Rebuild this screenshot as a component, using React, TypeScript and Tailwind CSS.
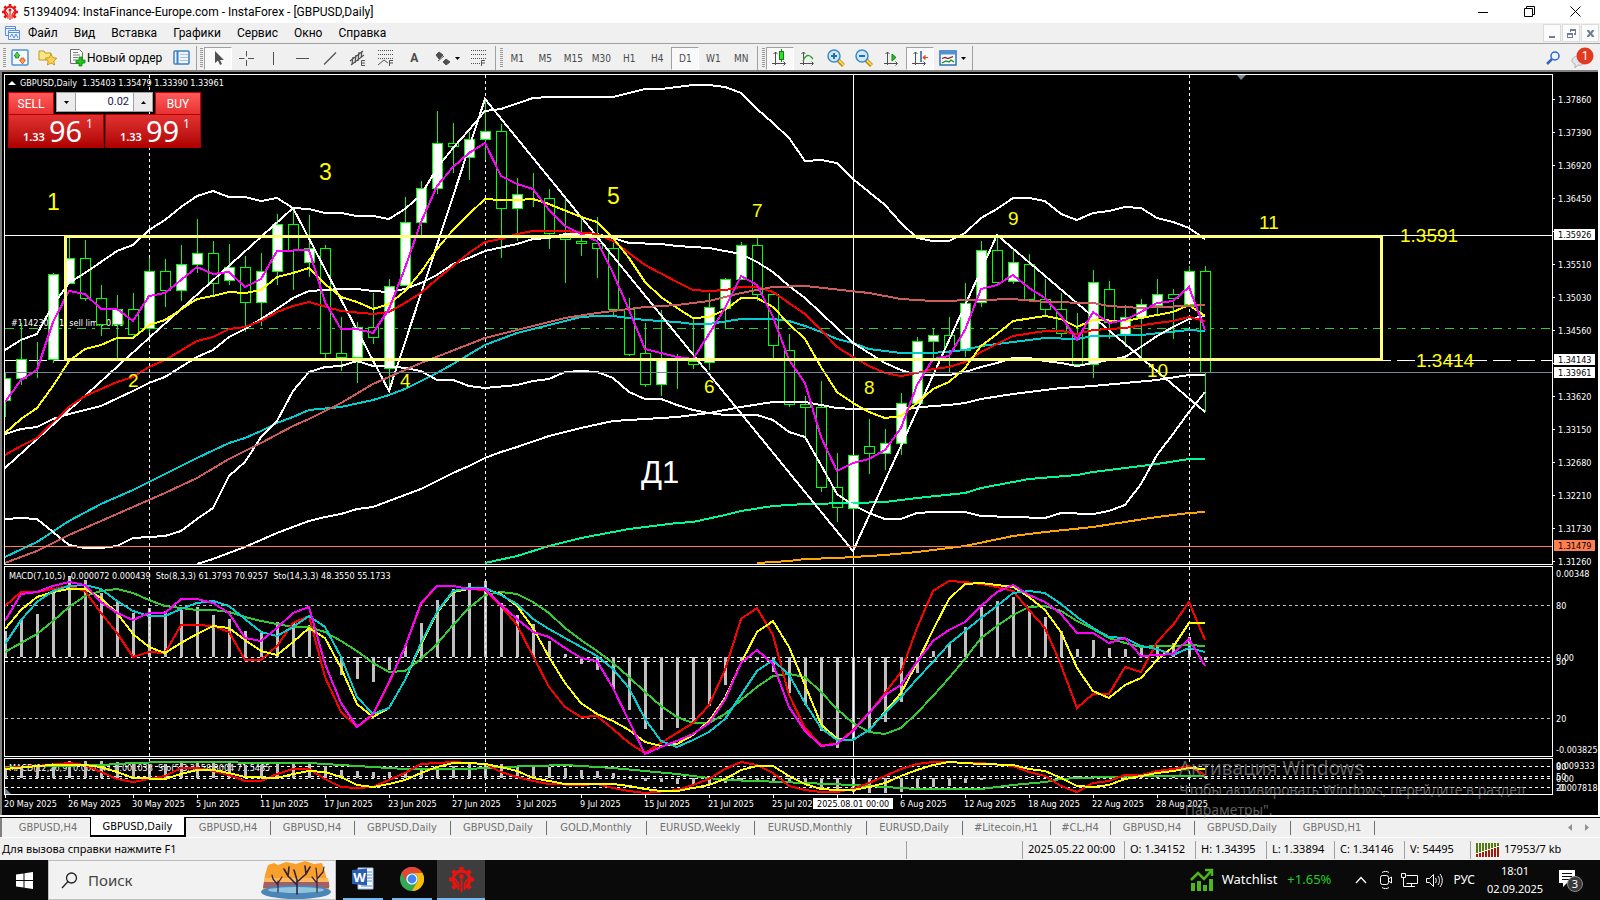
import type { ReactNode } from 'react'

const BAR_STEP = 16
const FIRST_BAR = 5

const barX = (i: number) => FIRST_BAR + i * BAR_STEP

// bar, high, body top, body bottom, low, up (1) or down (0)
const candles = [
  [0, 373, 378, 400, 417, 1], [1, 323, 359, 378, 385, 1], [2, 342, 359, 359, 378, 0], [3, 273, 274, 359, 363, 1],
  [4, 238, 258, 283, 283, 1], [5, 240, 258, 298, 301, 0], [6, 285, 298, 324, 336, 0], [7, 295, 309, 324, 358, 1],
  [8, 293, 309, 334, 334, 0], [9, 258, 271, 328, 333, 1], [10, 259, 271, 290, 307, 0], [11, 245, 264, 290, 301, 1],
  [12, 219, 253, 264, 273, 1], [13, 241, 253, 283, 297, 0], [14, 244, 267, 280, 285, 1], [15, 256, 267, 302, 332, 0],
  [16, 253, 271, 302, 326, 1], [17, 214, 224, 271, 285, 1], [18, 208, 224, 250, 290, 0], [19, 215, 248, 262, 277, 1],
  [20, 245, 248, 353, 358, 0], [21, 317, 353, 357, 371, 0], [22, 322, 327, 357, 383, 1], [23, 293, 327, 337, 344, 0],
  [24, 279, 286, 368, 390, 1], [25, 197, 222, 285, 285, 1], [26, 181, 188, 222, 237, 1], [27, 111, 143, 188, 194, 1],
  [28, 123, 143, 146, 173, 0], [29, 132, 139, 157, 180, 1], [30, 100, 131, 139, 160, 1], [31, 124, 131, 208, 258, 0],
  [32, 178, 194, 208, 241, 1], [33, 173, 194, 194, 207, 0], [34, 189, 198, 233, 249, 0], [35, 198, 237, 239, 283, 0],
  [36, 217, 241, 243, 256, 0], [37, 217, 243, 248, 278, 0], [38, 238, 248, 309, 315, 0], [39, 298, 309, 354, 356, 0],
  [40, 323, 353, 384, 387, 0], [41, 310, 360, 384, 396, 1], [42, 354, 361, 361, 389, 0], [43, 318, 361, 364, 369, 0],
  [44, 293, 307, 362, 370, 1], [45, 278, 279, 308, 328, 1], [46, 242, 245, 279, 279, 1], [47, 238, 245, 294, 301, 0],
  [48, 294, 294, 345, 360, 0], [49, 334, 350, 404, 407, 0], [50, 396, 404, 407, 436, 0], [51, 381, 407, 487, 492, 0],
  [52, 453, 487, 507, 522, 0], [53, 455, 455, 508, 508, 1], [54, 419, 446, 453, 474, 0], [55, 429, 443, 453, 470, 1],
  [56, 393, 403, 443, 455, 1], [57, 337, 341, 403, 403, 1], [58, 328, 335, 341, 358, 1], [59, 317, 335, 351, 372, 0],
  [60, 283, 303, 350, 357, 1], [61, 241, 250, 302, 307, 1], [62, 235, 250, 282, 284, 0], [63, 250, 262, 281, 284, 1],
  [64, 254, 264, 299, 299, 0], [65, 279, 299, 309, 317, 0], [66, 293, 309, 333, 337, 0], [67, 313, 333, 364, 366, 0],
  [68, 270, 282, 364, 378, 1], [69, 281, 289, 322, 339, 0], [70, 305, 317, 335, 347, 1], [71, 299, 304, 317, 357, 1],
  [72, 279, 294, 305, 315, 1], [73, 289, 294, 298, 339, 0], [74, 266, 271, 304, 304, 1], [75, 266, 271, 372, 412, 0],
]

// each line is a list of "bar y" pairs
const priceLines = [
  { color: '#00ced1', d: '0 557 2 542 4 521 6 504 8 490 9 482 12 458 14 443 15 438 16 431 17 423 18 417 19 410 21 407 23 400 24 395 25 389 27 373 28 364 30 345 32 333 34 325 36 317 37 316 38 316 40 320 42 322 43 324 44 324 46 319 48 319 49 321 50 326 51 332 52 339 53 343 54 349 56 353 58 353 60 350 61 346 63 342 65 338 67 339 68 336 71 335 74 330 75 331' },
  { color: '#ffffff', d: '12 564 13 559 14 553 15 547 17 533 19 521 20 517 21 514 22 509 23 507 24 501 25 495 26 489 27 481 28 473 29 466 30 458 31 452 32 447 34 436 36 428 38 421 40 419 41 418 42 417 44 413 45 410 46 407 48 402 50 402 51 405 52 408 53 409 56 409 58 406 59 405 60 403 61 399 63 394 66 388 68 386 70 383 72 380 74 375 75 375' },
  { color: '#00fa9a', d: '30 563 32 556 34 546 36 538 39 529 42 523 43 522 45 515 46 511 48 506 50 504 53 503 55 502 57 498 60 493 61 488 64 479 67 475 68 472 70 468 72 464 74 459 75 459' },
  { color: '#ffa500', d: '47 563 49 561 50 559 52 558 53 557 55 555 57 552 60 546 63 536 65 532 68 527 70 522 72 517 74 513 75 512' },
  { color: '#ffffff', d: '0 350 1 340 2 334 3 305 4 283 5 273 7 251 8 245 9 230 10 220 11 207 12 196 13 191 14 197 15 197 16 201 17 198 18 208 19 209 20 213 21 213 22 216 23 216 24 219 25 209 26 195 27 168 28 148 29 130 30 111 31 109 33 98 34 97 38 97 40 89 41 89 43 85 44 85 45 87 46 93 47 109 48 123 49 138 50 161 51 160 52 163 53 179 54 192 55 205 56 223 57 238 58 241 59 241 60 233 61 218 62 209 63 198 64 198 65 201 66 214 67 220 68 213 69 211 70 207 71 208 72 218 73 222 74 228 75 239' },
  { color: '#ffffff', d: '0 519 1 518 2 519 3 532 4 545 5 548 6 548 7 546 8 538 9 537 10 536 11 531 12 519 13 508 14 476 15 462 16 437 17 421 18 391 19 372 20 367 21 366 22 361 23 366 24 366 25 368 26 371 27 380 28 380 29 386 30 388 32 385 33 381 34 379 35 372 36 371 37 372 38 378 39 392 40 399 41 399 42 405 43 410 44 413 45 415 47 415 48 420 49 432 50 437 51 465 52 494 53 505 54 513 55 519 56 519 57 513 58 512 60 512 61 516 63 517 65 518 66 513 68 514 69 511 70 505 71 484 72 455 73 434 74 412 75 392' },
  { color: '#ffffff', d: '0 434 1 429 2 427 3 419 4 414 5 410 6 406 8 391 9 383 10 377 12 357 13 350 14 337 15 329 16 319 17 309 18 298 19 291 21 289 22 289 23 291 24 292 25 289 26 283 27 275 28 264 29 258 30 251 32 244 33 239 34 238 35 234 37 234 38 238 39 243 41 244 42 246 44 248 46 254 47 262 48 272 49 286 50 298 52 328 53 343 54 353 55 363 56 370 57 375 59 375 60 372 61 367 62 363 63 358 64 358 65 361 66 363 67 366 68 363 70 357 71 347 72 336 73 327 74 319 75 316' },
  { color: '#ffffff', d: '0 468 18 208 24 391 30 99 53 551 62 235 75 412' },
  { color: '#ff0000', d: '0 455 1 446 2 438 4 407 5 396 7 382 8 377 9 367 10 360 12 341 13 337 14 329 15 327 16 321 17 312 18 306 19 302 21 311 23 314 24 312 25 303 26 293 27 279 28 266 29 253 30 242 31 239 32 234 33 231 35 231 37 234 38 241 39 253 40 265 42 282 43 290 44 291 45 290 46 287 47 287 48 292 49 303 50 314 51 330 52 347 53 357 54 366 55 373 56 376 57 373 58 369 59 367 60 362 61 352 62 344 63 336 65 331 66 331 67 334 68 330 70 328 72 323 73 321 74 317 75 321' },
  { color: '#ffff00', d: '0 433 1 419 2 408 3 386 4 361 5 349 6 345 7 338 8 338 9 325 10 320 12 299 13 296 14 292 15 293 16 290 17 277 18 273 19 268 20 284 21 297 22 302 23 309 24 304 25 291 26 272 27 249 28 230 29 214 30 199 31 200 32 200 33 199 34 204 36 217 37 222 38 238 39 258 40 282 41 297 42 308 43 318 44 317 45 310 46 298 47 298 48 307 49 324 50 339 51 367 52 392 53 403 54 412 55 418 56 416 57 403 58 389 59 382 60 368 61 346 62 334 63 321 65 316 66 319 67 327 68 320 70 321 72 315 73 312 74 305 75 316' },
  { color: '#cd5c5c', d: '0 563 2 551 4 535 6 521 8 507 10 493 12 478 14 459 16 443 18 426 19 419 21 403 23 384 25 370 26 363 30 338 32 330 35 318 37 313 40 307 42 305 44 301 46 293 48 287 50 286 54 293 56 299 58 301 61 300 63 299 65 302 68 303 69 306 71 308 72 307 74 306 75 305' },
  { color: '#ff00ff', d: '0 402 1 380 2 370 3 322 4 291 5 294 6 309 7 309 8 321 9 296 10 293 12 267 13 274 14 272 15 287 16 279 17 251 19 250 20 302 21 329 22 329 23 333 24 309 25 268 26 222 27 186 28 167 29 153 30 143 31 176 32 184 33 189 34 210 35 226 36 234 37 241 38 273 39 310 40 349 42 357 43 359 44 334 45 308 46 276 47 285 48 317 49 360 50 383 51 437 52 471 53 463 54 459 55 450 56 428 57 385 58 359 59 356 60 330 61 289 62 285 63 275 64 288 65 298 66 316 67 340 68 312 69 323 70 320 71 312 72 303 73 301 74 287 75 330' },
]

const macdBars = [631, 620, 614, 590, 576, 580, 593, 602, 613, 608, 611, 610, 607, 615, 619, 631, 632, 622, 623, 625, 657, 675, 679, 682, 670, 646, 623, 600, 589, 583, 581, 603, 615, 624, 641, 654, 664, 670, 689, 710, 729, 730, 728, 723, 706, 685, 661, 660, 672, 693, 705, 731, 748, 740, 733, 722, 702, 673, 651, 643, 627, 607, 601, 597, 610, 617, 631, 649, 640, 648, 649, 648, 647, 643, 637, 660]

const macdLines = [
  { color: '#32cd32', ys: [652, 643, 634, 621, 607, 596, 591, 589, 593, 600, 606, 608, 610, 610, 612, 617, 621, 624, 627, 627, 632, 641, 651, 663, 672, 671, 659, 644, 625, 608, 595, 592, 594, 602, 613, 628, 640, 651, 663, 677, 692, 706, 717, 723, 723, 714, 700, 687, 676, 674, 677, 692, 709, 723, 732, 734, 728, 713, 696, 678, 659, 638, 626, 615, 607, 606, 611, 621, 629, 638, 643, 647, 646, 646, 645, 646] },
  { color: '#ff0000', ys: [606, 592, 592, 589, 586, 591, 613, 633, 657, 652, 653, 625, 625, 626, 632, 660, 660, 646, 623, 616, 677, 712, 727, 715, 683, 647, 604, 586, 586, 589, 590, 606, 625, 656, 687, 707, 717, 716, 729, 743, 753, 743, 733, 723, 705, 670, 619, 608, 635, 695, 728, 745, 744, 730, 713, 693, 672, 628, 591, 581, 582, 584, 587, 591, 610, 628, 665, 708, 694, 694, 667, 672, 642, 625, 602, 640] },
  { color: '#ffff00', ys: [629, 610, 597, 592, 589, 589, 598, 613, 634, 647, 653, 643, 634, 626, 628, 640, 651, 655, 642, 628, 638, 668, 704, 717, 708, 680, 645, 613, 592, 589, 589, 594, 606, 628, 657, 683, 703, 714, 721, 730, 742, 746, 744, 735, 721, 698, 663, 632, 621, 647, 685, 724, 739, 740, 730, 712, 693, 663, 630, 599, 584, 583, 585, 587, 597, 610, 632, 668, 691, 698, 685, 678, 660, 647, 623, 623] },
  { color: '#00ced1', ys: [644, 620, 602, 591, 586, 585, 589, 601, 611, 616, 616, 609, 603, 601, 606, 619, 632, 636, 627, 616, 627, 657, 697, 714, 708, 680, 643, 612, 591, 588, 588, 595, 604, 619, 629, 638, 647, 656, 669, 688, 719, 741, 747, 740, 732, 719, 695, 671, 660, 675, 703, 728, 740, 740, 730, 713, 697, 679, 662, 644, 631, 618, 606, 593, 591, 593, 604, 617, 628, 637, 638, 646, 649, 655, 648, 652] },
  { color: '#ff00ff', ys: [621, 594, 592, 586, 582, 585, 602, 613, 620, 613, 613, 599, 599, 603, 613, 638, 641, 628, 613, 607, 664, 703, 727, 714, 682, 647, 603, 586, 586, 589, 589, 605, 619, 632, 637, 648, 658, 661, 688, 721, 754, 747, 741, 734, 723, 700, 663, 650, 664, 707, 731, 746, 744, 731, 713, 695, 685, 662, 641, 630, 622, 606, 592, 585, 595, 602, 614, 633, 633, 643, 638, 656, 655, 654, 639, 666] },
]

const slowBars = [768, 767, 765, 763, 761, 761, 761, 762, 764, 764, 764, 763, 763, 763, 763, 765, 765, 764, 764, 764, 766, 770, 771, 772, 772, 772, 770, 768, 766, 764, 763, 764, 766, 767, 767, 768, 770, 771, 773, 777, 781, 782, 784, 785, 784, 783, 781, 781, 781, 783, 785, 788, 791, 792, 793, 793, 792, 789, 787, 786, 783, 780, 779, 778, 777, 777, 777, 776, 776, 776, 776, 776, 776, 776, 776, 777]

const slowLines = [
  { color: '#32cd32', d: '0 767 3 766 6 765 8 763 10 762 19 763 20 764 23 767 25 769 29 769 31 767 33 766 35 765 36 766 38 768 40 771 42 774 44 778 45 780 47 781 50 783 53 785 55 787 57 789 61 789 62 787 63 785 65 782 66 779 67 778 69 777 71 776 75 776' },
  { color: '#ff0000', d: '0 768 2 766 4 763 5 765 6 772 7 779 8 782 9 779 10 776 11 768 12 768 13 771 14 775 15 781 16 781 17 774 18 769 19 769 20 779 21 787 22 788 23 787 24 780 25 773 26 764 28 762 30 764 31 772 32 777 33 781 34 784 36 785 37 784 38 788 39 791 40 793 42 790 43 785 44 779 45 769 46 762 47 765 48 773 49 786 50 790 51 792 52 792 53 789 54 783 55 776 56 769 57 764 58 762 61 763 63 766 64 772 65 776 66 786 67 792 68 783 69 781 70 775 71 775 72 771 73 769 74 766 75 775' },
  { color: '#ffff00', d: '0 769 2 766 3 765 5 765 6 767 7 772 8 778 10 779 11 774 12 770 13 770 14 773 15 777 17 778 18 774 19 771 20 772 21 777 22 785 23 787 24 784 25 780 26 773 27 767 28 763 29 763 30 764 31 767 32 771 33 778 35 784 38 784 39 786 40 789 41 791 42 791 44 785 45 779 46 770 47 766 48 766 49 776 50 784 51 789 52 790 53 790 54 787 55 783 56 776 57 770 58 765 59 762 61 764 63 765 64 769 65 771 66 778 67 786 68 787 69 785 70 779 71 776 72 773 73 771 74 768 75 769' },
]

const waveLabels = [
  { text: '1', x: 47, y: 210, big: true },
  { text: '2', x: 128, y: 387 },
  { text: '3', x: 319, y: 180, big: true },
  { text: '4', x: 400, y: 387 },
  { text: '5', x: 607, y: 204, big: true },
  { text: '6', x: 704, y: 393 },
  { text: '7', x: 752, y: 217 },
  { text: '8', x: 864, y: 394 },
  { text: '9', x: 1008, y: 225 },
  { text: '10', x: 1147, y: 377 },
  { text: '11', x: 1259, y: 229 },
  { text: '1.3591', x: 1400, y: 242 },
  { text: '1.3414', x: 1416, y: 367 },
]

const priceScale = ['1.37860', '1.37390', '1.36920', '1.36450', '', '1.35510', '1.35030', '1.34560', '', '1.33620', '1.33150', '1.32680', '1.32210', '1.31730', '1.31260']

const dates = ['20 May 2025', '26 May 2025', '30 May 2025', '5 Jun 2025', '11 Jun 2025', '17 Jun 2025', '23 Jun 2025', '27 Jun 2025', '3 Jul 2025', '9 Jul 2025', '15 Jul 2025', '21 Jul 2025', '25 Jul 2025', '', '6 Aug 2025', '12 Aug 2025', '18 Aug 2025', '22 Aug 2025', '28 Aug 2025']

const tabs = [
  { name: 'GBPUSD,H4', width: 'w-21' },
  { name: 'GBPUSD,Daily', width: 'w-24' },
  { name: 'GBPUSD,Daily', width: 'w-24' },
  { name: 'GOLD,Monthly', width: 'w-25' },
  { name: 'EURUSD,Weekly', width: 'w-27' },
  { name: 'EURUSD,Monthly', width: 'w-28' },
  { name: 'EURUSD,Daily', width: 'w-24' },
  { name: '#Litecoin,H1', width: 'w-22' },
  { name: '#CL,H4', width: 'w-15' },
  { name: 'GBPUSD,H4', width: 'w-21' },
  { name: 'GBPUSD,Daily', width: 'w-24' },
  { name: 'GBPUSD,H1', width: 'w-21' },
]

function pairsToPoints(d: string) {
  const n = d.split(' ').map(Number)
  const out: string[] = []
  for (let i = 0; i < n.length; i += 2) out.push(`${barX(n[i])},${n[i + 1]}`)
  return out.join(' ')
}

function ysToPoints(ys: number[]) {
  return ys.map((y, i) => `${barX(i)},${y}`).join(' ')
}

function Line({ points, color }: { points: string; color: string }) {
  return <polyline points={points} fill="none" stroke={color} strokeWidth="2" shapeRendering="crispEdges" />
}

// month separators plus the crosshair, shared by all panes
function VerticalMarks({ top, bottom }: { top: number; bottom: number }) {
  return (
    <g stroke="#ffffff" shapeRendering="crispEdges">
      {[9, 30, 74].map((i) => (
        <line key={i} x1={barX(i)} x2={barX(i)} y1={top} y2={bottom} strokeDasharray="3 3" />
      ))}
      <line x1={barX(53)} x2={barX(53)} y1={top} y2={bottom} />
    </g>
  )
}

function Levels({ ys, color }: { ys: number[]; color: string }) {
  return (
    <g stroke={color} strokeDasharray="3 3" shapeRendering="crispEdges">
      {ys.map((y) => (
        <line key={y} x1="5" x2="4000" y1={y} y2={y} />
      ))}
    </g>
  )
}

function Histogram({ ys, zero }: { ys: number[]; zero: number }) {
  return (
    <g fill="#c0c0c0" shapeRendering="crispEdges">
      {ys.map((y, i) => (
        <rect key={i} x={barX(i) - 1} y={Math.min(y, zero)} width="3" height={Math.abs(y - zero)} />
      ))}
    </g>
  )
}

interface PaneProps {
  top: number
  height: string
  scale: ReactNode
  children: ReactNode
}

function Pane({ top, height, scale, children }: PaneProps) {
  return (
    <div className={`flex ${height}`}>
      <div className="min-w-0 flex-1 overflow-hidden border border-white">
        <svg className="block h-full w-full">
          <g transform={`translate(-5 ${-top - 1})`}>{children}</g>
        </svg>
      </div>
      <svg className="block h-full w-[45px] shrink-0 overflow-visible">
        <g transform={`translate(0 ${-top})`} fill="#ffffff" fontSize="9">
          {scale}
        </g>
      </svg>
    </div>
  )
}

function Badge({ y, text, color }: { y: number; text: string; color: string }) {
  return (
    <g>
      <rect x="1" y={y - 5} width="41" height="11" fill={color} />
      <text x="5" y={y + 4} fill="#000000">{text}</text>
    </g>
  )
}

function PricePane() {
  const scale = (
    <>
      {priceScale.map((label, i) => {
        const y = 99 + i * 33
        return (
          <g key={i}>
            <rect x="0" y={y} width="2" height="1" />
            <text x="5" y={y + 4}>{label}</text>
          </g>
        )
      })}
      <Badge y={234} text="1.35926" color="#ffffff" />
      <Badge y={359} text="1.34143" color="#ffffff" />
      <Badge y={372} text="1.33961" color="#ffffff" />
      <Badge y={545} text="1.31479" color="#ff7f50" />
    </>
  )
  return (
    <Pane top={74} height="h-[491px]" scale={scale}>
      <g fill="none" shapeRendering="crispEdges">
        <line x1="5" x2="4000" y1="235" y2="235" stroke="#ffffff" />
        <line x1="5" x2="4000" y1="360" y2="360" stroke="#ffffff" strokeDasharray="18 6" />
        <line x1="5" x2="4000" y1="328" y2="328" stroke="#32cd32" strokeDasharray="9 6 3 6" />
      </g>
      <text x="11" y="326" fontSize="9" fill="#ffffff" xmlSpace="preserve">#114230571  sell limit 0.50</text>
      <text x="20" y="86" fontSize="9" fill="#ffffff" xmlSpace="preserve">GBPUSD,Daily  1.35403 1.35479 1.33390 1.33961</text>
      <path d="M8 85h8l-4-4z" fill="#ffffff" />
      <VerticalMarks top={75} bottom={564} />
      <g stroke="#00ff00" shapeRendering="crispEdges">
        {candles.map(([i, high, top, bottom, low, up]) => (
          <g key={i}>
            <line x1={barX(i)} x2={barX(i)} y1={high} y2={low} />
            <rect x={barX(i) - 5} y={top} width="10" height={bottom - top} fill={up ? '#ffffff' : '#000000'} />
          </g>
        ))}
      </g>
      {priceLines.map((line, i) => (
        <Line key={i} points={pairsToPoints(line.d)} color={line.color} />
      ))}
      <g fill="none" shapeRendering="crispEdges">
        <line x1="5" x2="4000" y1="372" y2="372" stroke="#778899" />
        <line x1="5" x2="4000" y1="546" y2="546" stroke="#ff7f50" />
        <rect x="65" y="236" width="1316" height="123" stroke="#ffff80" strokeWidth="3" />
      </g>
      <path d="M1237 75h9l-5 5z" fill="#778899" />
      <g fill="#ffff00" className="font-['Liberation_Sans',Arial,sans-serif]">
        {waveLabels.map((label) => (
          <text key={label.text} x={label.x} y={label.y} fontSize={label.big ? 23 : 19}>{label.text}</text>
        ))}
        <text x="641" y="483" fontSize="31" fill="#ffffff">Д1</text>
      </g>
    </Pane>
  )
}

function MacdPane() {
  const scale = (
    <>
      <text x="3" y="577">0.00348</text>
      <text x="3" y="609">80</text>
      <text x="3" y="665">50</text>
      <text x="3" y="661">0.00</text>
      <text x="3" y="722">20</text>
      <text x="3" y="753">-0.003825</text>
    </>
  )
  return (
    <Pane top={566} height="h-[191px]" scale={scale}>
      <Levels ys={[605, 718]} color="#c0c0c0" />
      <Levels ys={[657, 661]} color="#ffffff" />
      <Histogram ys={macdBars} zero={657} />
      <VerticalMarks top={567} bottom={756} />
      {macdLines.map((line) => (
        <Line key={line.color} points={ysToPoints(line.ys)} color={line.color} />
      ))}
      <text x="9" y="579" fontSize="9" fill="#ffffff" xmlSpace="preserve">MACD(7,10,5) -0.000072 0.000439  Sto(8,3,3) 61.3793 70.9257  Sto(14,3,3) 48.3550 55.1733</text>
    </Pane>
  )
}

function SlowPane() {
  const scale = (
    <>
      <text x="3" y="769">0.009333</text>
      <text x="3" y="770">80</text>
      <text x="3" y="780">50</text>
      <text x="3" y="782">0.00</text>
      <text x="3" y="791">20</text>
      <text x="3" y="791">-0.007818</text>
    </>
  )
  return (
    <Pane top={758} height="h-[37px]" scale={scale}>
      <text x="9" y="771" fontSize="9" fill="#ffffff" xmlSpace="preserve">MACD(12,26,9) 0.000341 0.001038  Sto(5,3,3) 58.8004 71.5485</text>
      <Levels ys={[766, 776, 778, 787]} color="#ffffff" />
      <Histogram ys={slowBars} zero={778} />
      <VerticalMarks top={759} bottom={794} />
      {slowLines.map((line) => (
        <Line key={line.color} points={pairsToPoints(line.d)} color={line.color} />
      ))}
      <path d="M5 788v6h6z" fill="#778899" />
    </Pane>
  )
}

function DateAxis() {
  return (
    <svg className="block h-5 w-full" fontSize="9" fill="#ffffff">
      {dates.map((date, k) => (
        <g key={k}>
          <rect x={1 + k * 64} y="0" width="1" height="3" />
          <text x={k * 64} y="12">{date}</text>
        </g>
      ))}
      <rect x="809" y="3" width="80" height="11" />
      <text x="813" y="12" fill="#000000">2025.08.01 00:00</text>
    </svg>
  )
}

function TradeButton({ side, big }: { side: string; big: string }) {
  const sell = side === 'SELL'
  return (
    <button className={`flex w-24 flex-col text-white ${sell ? 'items-start' : 'items-end'}`}>
      <span className="flex h-[22px] w-[46px] items-center justify-center border border-b-0 border-[#c00000] bg-linear-to-b from-[#ff5a5a] to-[#e83030] text-[12px]">
        {side}
      </span>
      <span className="flex h-[34px] w-full items-end justify-center gap-1 border border-[#b00000] bg-linear-to-b from-[#e23030] to-[#ae0000] pb-1 pl-1 font-['Noto_Sans','Open_Sans',sans-serif]">
        <span className="text-[11px] leading-3 font-semibold">1.33</span>
        <span className="text-[29px] leading-[25px]">{big}</span>
        <span className="self-start pt-[3px] text-[12px] leading-3">1</span>
      </span>
    </button>
  )
}

function TradePanel() {
  return (
    <div className="absolute top-5 left-1.5 flex gap-px font-['Roboto','Noto_Sans',sans-serif]">
      <TradeButton side="SELL" big="96" />
      <TradeButton side="BUY" big="99" />
      <div className="absolute top-0 left-12 flex h-5 w-[97px] border border-[#a0a0a0] bg-white">
        <button aria-label="Decrease volume" className="flex w-[19px] items-center justify-center border-r border-[#a0a0a0] bg-[#ececec]">
          <svg width="5" height="3"><path d="M0 0h5L2.500 3z" /></svg>
        </button>
        <input aria-label="Volume" defaultValue="0.02" className="min-w-0 flex-1 px-1 text-right text-[11px] text-[#1a1a50]" />
        <button aria-label="Increase volume" className="flex w-[19px] items-center justify-center border-l border-[#a0a0a0] bg-[#ececec]">
          <svg width="5" height="3"><path d="M0 3h5L2.500 0z" /></svg>
        </button>
      </div>
    </div>
  )
}

function InstaLogo({ size, hub }: { size: number; hub: string }) {
  return (
    <svg width={size} height={size} viewBox="0 0 24 24" fill="none">
      <g stroke="#e81410" strokeWidth="4">
        <path d="M12 0v5M0 12h5M19 12h5M3.500 3.500l4 4M20.500 3.500l-4 4M3.500 20.500l4-4M20.500 20.500l-4-4" />
      </g>
      <circle cx="12" cy="12" r="8" fill={hub} stroke="#e81410" strokeWidth="3" />
      <path d="M8 17h8v7H8z" fill={hub} />
      <path d="M12 24V11M9 22v-6L5.500 11M15 22v-6l3.500-5" stroke="#e81410" strokeWidth="1.800" />
      <circle cx="12" cy="9" r="2.300" fill="#e81410" />
    </svg>
  )
}

function TitleBar() {
  return (
    <header className="flex h-[23px] items-center bg-white pl-0.5 text-[12px] text-black">
      <InstaLogo size={16} hub="#ffffff" />
      <h1 className="flex-1 pl-[5px]">51394094: InstaFinance-Europe.com - InstaForex - [GBPUSD,Daily]</h1>
      <button aria-label="Minimize" className="flex h-full w-[46px] items-center justify-center">
        <svg width="10" height="10" stroke="#000000"><path d="M0 5.500h10" /></svg>
      </button>
      <button aria-label="Restore" className="flex h-full w-[46px] items-center justify-center">
        <svg width="11" height="11" fill="none" stroke="#000000"><path d="M.5 2.500h8v8h-8zM2.500 2.500v-2h8v8h-2" /></svg>
      </button>
      <button aria-label="Close" className="flex h-full w-[46px] items-center justify-center">
        <svg width="11" height="11" stroke="#000000"><path d="M.5.5l10 10M10.500.5l-10 10" /></svg>
      </button>
      <span className="w-0.5" />
    </header>
  )
}

function MenuBar() {
  const mdi = [
    { label: 'Minimize chart', d: 'M1 7h6v2H1z' },
    { label: 'Restore chart', d: 'M3 0h6v6H7V4h1V2H4v1H3zM0 4h6v5H0zM1 6v2h4V6z' },
    { label: 'Close chart', d: 'M1 1h2l1.500 2L6 1h2v1L6 4.500 8 7v1H6L4.500 6 3 8H1V7l2-2.500L1 2z' },
  ]
  return (
    <nav className="flex h-5 items-center bg-[#f0f0f0] pl-[5px] text-[12px] text-black">
      <svg width="15" height="15" fill="#eaf3ff" stroke="#5c8fd6">
        <path d="M.5.5h10v9H.5zM.5 2.500h10" />
        <path d="M3.500 4.500h11v9h-11zM3.500 6.500h11M5 11l2-3 2 4 2-4 2 4" />
      </svg>
      {['Файл', 'Вид', 'Вставка', 'Графики', 'Сервис', 'Окно', 'Справка'].map((item) => (
        <button key={item} className="px-2">{item}</button>
      ))}
      <span className="flex-1" />
      {mdi.map(({ label, d }) => (
        <button key={label} aria-label={label} className="mr-px flex h-[18px] w-[18px] items-center justify-center border border-[#dcdcdc] bg-[#fbfbfb]">
          <svg width="9" height="9" fill="#6d7f94" fillRule="evenodd"><path d={d} /></svg>
        </button>
      ))}
    </nav>
  )
}

function Grip() {
  return (
    <svg width="4" height="20" className="shrink-0" stroke="#9a9a9a" shapeRendering="crispEdges">
      <path d="M2 0v20" strokeWidth="3" strokeDasharray="1 1" />
    </svg>
  )
}

function ToolSeparator() {
  return <span className="h-[25px] w-px shrink-0 bg-[#a0a0a0]" />
}

interface ToolProps {
  label: string
  active?: boolean
  wide?: boolean
  children: ReactNode
}

function Tool({ label, active, wide, children }: ToolProps) {
  return (
    <button
      aria-label={label}
      className={`flex h-[23px] shrink-0 items-center justify-center text-[#4a4a4a] ${wide ? 'w-9 gap-1' : 'w-7'} ${
        active ? 'border border-[#a0a0a0] border-r-white border-b-white bg-[#f9f9f9]' : ''
      }`}
    >
      {children}
      {wide && <svg width="5" height="3" fill="#000000"><path d="M0 0h5L2.500 3z" /></svg>}
    </button>
  )
}

function Glyph({ children }: { children: ReactNode }) {
  return (
    <svg width="18" height="18" viewBox="0 0 18 18" fill="none" stroke="#505050" className="shrink-0 overflow-visible">
      {children}
    </svg>
  )
}

function Magnifier({ plus }: { plus?: boolean }) {
  return (
    <Glyph>
      <path d="M11 11l5.500 5.500" stroke="#b8860b" strokeWidth="4" />
      <path d="M11 10.500l5.500 5.500" stroke="#ffd84a" strokeWidth="2" />
      <circle cx="7" cy="7" r="6" fill="#cfe8fa" stroke="#3d8bc4" strokeWidth="1.500" />
      <path d={plus ? 'M4 7h6M7 4v6' : 'M4 7h6'} stroke="#2470ac" strokeWidth="2" />
    </Glyph>
  )
}

const axes = 'M4.500 3v13M2.500 5l2-2 2 2M1 14.500h13M12.500 12.500l2 2-2 2'

function Toolbar() {
  const frames = ['M1', 'M5', 'M15', 'M30', 'H1', 'H4', 'D1', 'W1', 'MN']
  return (
    <div className="flex h-[27px] items-center border-t border-[#a0a0a0] bg-[#f0f0f0] pt-0.5 pl-0.5 text-[12px]">
      <Grip />
      <Tool label="Новый график">
        <Glyph>
          <rect x="1" y="1" width="16" height="15" rx="1" fill="#f6fbff" stroke="#4f94cf" strokeWidth="1.500" />
          <path d="M3 7l3-4 3 4H7.500v2h-3V7z" fill="#4fd04f" stroke="#148a14" strokeWidth=".8" />
          <path d="M8.500 11l3 4 3-4H13V9h-3v2z" fill="#ff9c5a" stroke="#d84a10" strokeWidth=".8" />
        </Glyph>
      </Tool>
      <Tool label="Профили">
        <Glyph>
          <path d="M0 2h5l1 2h6v7H0z" fill="#ffe680" stroke="#b99a2e" />
          <path d="M12 5l1.800 3.600 4 .6-2.900 2.800.7 4L12 14.100 8.400 16l.7-4-2.900-2.800 4-.6z" fill="#ffd04a" stroke="#b58a1a" strokeWidth=".8" />
        </Glyph>
      </Tool>
      <button className="flex items-center gap-px pl-1.5 text-black">
        <Glyph>
          <path d="M2.500.5h9l3 3v11h-12z" fill="#fafafa" stroke="#707070" />
          <path d="M5 3.500h5M5 6h7M5 8.500h5M5 11h3" stroke="#808080" />
          <path d="M11 8h3v3h3v3h-3v3h-3v-3H8v-3h3z" fill="#1fc61f" stroke="#0d860d" strokeWidth=".8" />
        </Glyph>
        Новый ордер
      </button>
      <span className="w-1.5" />
      <Tool label="Терминал">
        <Glyph>
          <rect x="1" y="2" width="15" height="13" rx="1" fill="#eef6ff" stroke="#3f7fbf" strokeWidth="1.500" />
          <path d="M4.500 2v13" stroke="#3f7fbf" strokeWidth="2" />
          <path d="M7 5.500h8M7 8.500h8M7 11.500h8" stroke="#a9c4de" />
        </Glyph>
      </Tool>
      <ToolSeparator />
      <span className="w-0.5" />
      <Grip />
      <span className="w-px" />
      <Tool label="Курсор" active>
        <Glyph><path d="M6 2v12l3-2.500 2 4.500 2-1-2-4h4z" fill="#505050" stroke="none" /></Glyph>
      </Tool>
      <Tool label="Перекрестие">
        <Glyph><path d="M9.500 2v5.500M9.500 11v6M2 9.500h5.500M11 9.500h6" /></Glyph>
      </Tool>
      <Tool label="Вертикальная линия"><Glyph><path d="M8.500 3v13" /></Glyph></Tool>
      <Tool label="Горизонтальная линия"><Glyph><path d="M3 9.500h13" /></Glyph></Tool>
      <Tool label="Трендовая линия"><Glyph><path d="M3 15.500L15 3.500" strokeWidth="1.300" /></Glyph></Tool>
      <Tool label="Равноудаленный канал">
        <Glyph>
          <path d="M1 12L14 2M2 16L15 6M4 8l-1 7M7 6l-1 8M10 3L9 12M13 2l-1 7" strokeWidth="1.200" />
          <path d="M16 11.500h-3.500v5H16M12.500 14H16" />
        </Glyph>
      </Tool>
      <Tool label="Линии Фибоначчи">
        <Glyph>
          <path d="M1 1.500h16M1 5.500h16M1 9.500h16" strokeDasharray="1 1" />
          <path d="M1 16l6-5 4 3" />
          <path d="M16 11.500h-3.500V17M12.500 14H16" />
        </Glyph>
      </Tool>
      <Tool label="Текст"><span className="text-[12px] font-bold">A</span></Tool>
      <Tool label="Стрелки" wide>
        <Glyph>
          <path d="M6 3l4 3-4 4-3-4zM13 10l4 3-4 3-3-3z" fill="#505050" />
          <path d="M5 12l6-5" />
        </Glyph>
      </Tool>
      <Tool label="Сетка Фибоначчи">
        <Glyph>
          <path d="M2 1.500h15M2 5.500h15M2 9.500h15M2 14.500h9" strokeDasharray="1 1" />
          <path d="M16 11.500h-3.500V17M12.500 14H16" />
        </Glyph>
      </Tool>
      <span className="w-[3px]" />
      <ToolSeparator />
      <span className="w-[3px]" />
      <Grip />
      {frames.map((frame) => (
        <Tool key={frame} label={frame} active={frame === 'D1'}>
          <span className="font-['DejaVu_Sans_Condensed','DejaVu_Sans',sans-serif] text-[10px]">{frame}</span>
        </Tool>
      ))}
      <span className="w-0.5" />
      <ToolSeparator />
      <span className="w-[3px]" />
      <Grip />
      <span className="w-px" />
      <Tool label="Свечи" active>
        <Glyph>
          <path d={axes} />
          <path d="M10.500 0v13" stroke="#0a8a0a" />
          <rect x="8.500" y="2.500" width="4" height="8" fill="#2ee02e" stroke="#0a8a0a" />
        </Glyph>
      </Tool>
      <Tool label="Линия">
        <Glyph>
          <path d={axes} />
          <path d="M4 12c3-7 6-7 10-2" stroke="#30a030" strokeWidth="1.300" />
        </Glyph>
      </Tool>
      <Tool label="Увеличить"><Magnifier plus /></Tool>
      <Tool label="Уменьшить"><Magnifier /></Tool>
      <Tool label="Автопрокрутка">
        <Glyph>
          <path d={axes} />
          <path d="M9 5l4 3.500L9 12z" fill="#22c022" stroke="#0a8a0a" />
        </Glyph>
      </Tool>
      <Tool label="Сдвиг графика" active>
        <Glyph>
          <path d={axes} />
          <path d="M10 2v11" stroke="#2060a0" strokeWidth="1.500" />
          <path d="M17 8.500h-5M14 6.500l-2 2 2 2z" fill="#e04a1a" stroke="#e04a1a" />
        </Glyph>
      </Tool>
      <Tool label="Шаблоны" wide>
        <Glyph>
          <rect x="1" y="2" width="16" height="14" fill="#f6fbff" stroke="#2e6fb4" strokeWidth="1.500" />
          <path d="M1 4h16" stroke="#4e92d6" strokeWidth="3" />
          <path d="M3 9.500l3-1 3 1 5-2" stroke="#8a1a1a" strokeWidth="1.300" />
          <path d="M3 14l4-2 3 1 2-2 3 2" stroke="#1a8a1a" strokeWidth="1.300" />
        </Glyph>
      </Tool>
      <span className="w-0.5" />
      <ToolSeparator />
      <span className="flex-1" />
      <button aria-label="Поиск" className="mr-2.5">
        <svg width="14" height="14" fill="none" stroke="#3065c8">
          <circle cx="9" cy="5" r="4" strokeWidth="1.500" fill="#eef4ff" />
          <path d="M6 8l-5 5" strokeWidth="2.500" />
        </svg>
      </button>
      <button aria-label="Сообщения" className="mr-1.5">
        <svg width="24" height="22" viewBox="0 0 24 22">
          <path d="M2 14c0-4 4-5 7-5s8 2 7 5-5 5-8 4l-3 3v-4c-2-1-3-2-3-3z" fill="#e4e4ea" stroke="#b0b0b8" />
          <circle cx="15" cy="9" r="8.500" fill="#e23a20" />
          <text x="15" y="13" fontSize="12" textAnchor="middle" fill="#ffffff">1</text>
        </svg>
      </button>
    </div>
  )
}

function ChartTabs() {
  return (
    <div className="flex h-5 border-t border-black bg-[#f0f0f0] font-['DejaVu_Sans_Condensed','DejaVu_Sans',sans-serif] text-[11px] text-[#707070]">
      <button className="w-[90px] border-l-2 border-[#808080] pt-0.5 pl-1">GBPUSD,H4</button>
      <button className="-mt-px w-24 border-r-2 border-b-2 border-l border-black bg-white pt-0.5 text-black">GBPUSD,Daily</button>
      <button className="flex w-21 items-center justify-center pt-px">GBPUSD,H4</button>
      {tabs.map((tab, i) => (
        <button key={i} className={`relative flex items-center justify-center pt-px ${tab.width}`}>
          <span className="absolute top-[3px] left-0 h-3.5 w-px bg-[#707070]" />
          {tab.name}
        </button>
      ))}
      <span className="mt-[3px] h-3.5 w-px bg-[#707070]" />
      <span className="flex-1" />
      <button aria-label="Scroll tabs left" className="px-1.5"><svg width="5" height="7" fill="#909090"><path d="M4 0v7L0 3.500z" /></svg></button>
      <button aria-label="Scroll tabs right" className="mr-1 px-1.5"><svg width="5" height="7" fill="#909090"><path d="M0 0v7l4-3.500z" /></svg></button>
    </div>
  )
}

function StatusCell({ width, children }: { width: string; children?: ReactNode }) {
  return <span className={`flex h-[18px] shrink-0 items-center border-l border-[#a0a0a0] pl-[5px] ${width}`}>{children}</span>
}

function StatusBar() {
  return (
    <footer className="flex h-[23px] items-center border-t border-white bg-[#f0f0f0] pt-px font-['Noto_Sans','Open_Sans',sans-serif] text-[11px] whitespace-nowrap text-black">
      <span className="flex-1 pl-0.5">Для вызова справки нажмите F1</span>
      <StatusCell width="w-[116px]" />
      <StatusCell width="w-[102px]">2025.05.22 00:00</StatusCell>
      <StatusCell width="w-[71px]">O: 1.34152</StatusCell>
      <StatusCell width="w-[71px]">H: 1.34395</StatusCell>
      <StatusCell width="w-[68px]">L: 1.33894</StatusCell>
      <StatusCell width="w-[70px]">C: 1.34146</StatusCell>
      <StatusCell width="w-[66px]">V: 54495</StatusCell>
      <StatusCell width="w-[130px]">
        <svg width="24" height="14" className="mr-1" shapeRendering="crispEdges">
          {[0, 1, 2, 3, 4, 5, 6, 7].map((k) => (
            <g key={k}>
              <rect x={k * 3} y="0" width="2" height={10 - k} fill="#4e7d0e" />
              <rect x={k * 3} y={11 - k} width="2" height={3 + k} fill="#a01c0c" />
            </g>
          ))}
        </svg>
        17953/7 kb
      </StatusCell>
    </footer>
  )
}

function SearchArt() {
  return (
    <svg width="70" height="38" viewBox="0 0 70 38">
      <path d="M7 4l6-2 4 2 8-3 10 2 9-3 9 3 8-1 3 9 4 17H2L4 14z" fill="#f9a02c" />
      <path d="M4 17h63l2 9H2z" fill="#fcb95c" />
      <path d="M3 21h65v6H2z" fill="#a0606a" />
      <ellipse cx="35" cy="31" rx="35" ry="7" fill="#4a86b8" />
      <ellipse cx="35" cy="29" rx="28" ry="3" fill="#8fc4dc" />
      <g fill="none" stroke="#33203c" strokeLinecap="round">
        <path d="M36 33V19M36 24l-9-9M27 15l-4-7M27 15l1-9M36 19l-3-10M36 21l9-8M45 13l4-7M45 13l-1-8" strokeWidth="1.600" />
        <path d="M17 31V20M17 24l-5-6M17 22l4-6M12 18l-1-4M56 31V16M56 22l-5-6M56 18l6-7M56 16l-1-9M62 11l1-5" strokeWidth="1.200" />
      </g>
    </svg>
  )
}

function Taskbar() {
  return (
    <div className="flex h-10 items-stretch bg-[#0a0a0a] font-['Noto_Sans','Open_Sans',sans-serif] text-white">
      <button aria-label="Start" className="flex w-12 items-center justify-center">
        <svg width="17" height="17" viewBox="0 0 17 17" fill="#ffffff">
          <path d="M0 2.400l7.500-1V8H0zM8.500 1.300L17 0v8H8.500zM0 9h7.500v6.600L0 14.600zM8.500 9H17v8l-8.500-1.300z" />
        </svg>
      </button>
      <label className="flex w-72 items-center border border-[#bdbdbd] bg-[#f2f2f2] pl-3">
        <svg width="17" height="17" fill="none" stroke="#222222" strokeWidth="1.300">
          <circle cx="10.500" cy="6" r="5" />
          <path d="M7 9.500l-6 6.500" />
        </svg>
        <input aria-label="Поиск" placeholder="Поиск" className="min-w-0 flex-1 pl-2.5 text-[15px] placeholder:text-[#444444]" />
        <span className="mr-1"><SearchArt /></span>
      </label>
      <button aria-label="Word" className="ml-[7px] flex w-10 items-center justify-center border-b-2 border-[#76b9ed]">
        <svg width="24" height="24" viewBox="0 0 24 24">
          <path d="M7 1h15v21H7z" fill="#f4f8fd" stroke="#9fbfe6" />
          <path d="M16 5h5M16 8h5M16 11h5M16 14h5M10 19h11" stroke="#5b8fd0" />
          <path d="M1 3l15-1.500v17L1 17z" fill="#2a5fb0" />
          <text x="8.500" y="15" fontSize="13" fontWeight="700" textAnchor="middle" fill="#ffffff">W</text>
        </svg>
      </button>
      <button aria-label="Chrome" className="ml-[9px] flex w-10 items-center justify-center border-b-2 border-[#76b9ed]">
        <svg width="24" height="24" viewBox="0 0 24 24">
          <circle cx="12" cy="12" r="12" fill="#34a853" />
          <path d="M1.600 6A12 12 0 0 1 22.400 6H12a6 6 0 0 0-5.200 9z" fill="#ea4335" />
          <path d="M22.400 6A12 12 0 0 1 12 24l5.200-9A6 6 0 0 0 12 6z" fill="#fbbc05" />
          <circle cx="12" cy="12" r="5.600" fill="#ffffff" />
          <circle cx="12" cy="12" r="4.400" fill="#4285f4" />
        </svg>
      </button>
      <button aria-label="InstaForex" className="ml-[5px] flex w-12 items-center justify-center border-b-2 border-[#76b9ed] bg-[#3d3d3d]">
        <InstaLogo size={25} hub="#3d3d3d" />
      </button>
      <span className="flex-1" />
      <button className="flex items-center text-[13px]">
        <svg width="24" height="24" viewBox="0 0 24 24" className="mr-2" fill="none" stroke="#4cb81e">
          <path d="M3 23v-8M9 23V13M15 23v-6M21 23V11" strokeWidth="4" />
          <path d="M1 12l7-7 6 6 8-9M15 2h7v6" strokeWidth="2.500" />
        </svg>
        Watchlist
        <span className="ml-2.5 text-[#1fd01f]">+1.65%</span>
      </button>
      <button aria-label="Hidden icons" className="ml-6 flex items-center">
        <svg width="12" height="8" fill="none" stroke="#ffffff" strokeWidth="1.300"><path d="M1 7l5-5.500L11 7" /></svg>
      </button>
      <span className="ml-3 flex items-center gap-2">
        <svg width="14" height="18" fill="none" stroke="#ffffff">
          <rect x="1.500" y="4.500" width="8" height="9" rx="2" />
          <path d="M9.500 8l3-2v6l-3-2M3 1.500c2-1.500 5-1.500 7 0M3 16.500c2 1.500 5 1.500 7 0" />
        </svg>
        <svg width="17" height="15" fill="none" stroke="#ffffff">
          <path d="M5.500 2.500h11v8h-11M.5.5h4v4h-4zM2.500 4.500v9h6M10.500 10.500v3M7 13.500h7" />
        </svg>
        <svg width="17" height="15" fill="none" stroke="#ffffff">
          <path d="M.5 5.500h3l4-4v12l-4-4h-3zM9.500 5c1 1.500 1 3.500 0 5M12 3c2 3 2 6 0 9M14 1c3 4 3 9 0 13" />
        </svg>
      </span>
      <button className="ml-2.5 text-[12px]">РУС</button>
      <div className="ml-3 flex w-14 flex-col items-center justify-center text-[11px] leading-[18px]">
        <span>18:01</span>
        <span>02.09.2025</span>
      </div>
      <button aria-label="Notifications" className="mr-4 ml-4 flex items-center">
        <svg width="25" height="26" viewBox="0 0 25 26">
          <path d="M0 3h16v13H8l-4 4v-4H0z" fill="#ffffff" />
          <path d="M3 6.500h10M3 9.500h10M3 12.500h7" stroke="#0a0a0a" />
          <circle cx="16" cy="17" r="7.500" fill="#3a3a3a" stroke="#8a8a8a" />
          <text x="16" y="21" fontSize="11" textAnchor="middle" fill="#ffffff">3</text>
        </svg>
      </button>
    </div>
  )
}

export default function App() {
  return (
    <div className="relative flex min-h-screen flex-col overflow-hidden bg-white font-['Roboto','Noto_Sans',sans-serif]">
      <TitleBar />
      <MenuBar />
      <Toolbar />
      <main className="relative mr-0.5 h-[745px] border-t-2 border-l-2 border-[#808080] bg-black pt-0.5 font-['DejaVu_Sans_Condensed','DejaVu_Sans',sans-serif]">
        <div className="flex flex-col gap-px pl-0.5">
          <PricePane />
          <MacdPane />
          <SlowPane />
        </div>
        <div className="pl-0.5">
          <DateAxis />
        </div>
        <TradePanel />
      </main>
      <div className="h-0.5 bg-white" />
      <ChartTabs />
      <StatusBar />
      <Taskbar />
      <div className="pointer-events-none absolute right-[66px] bottom-20 w-[355px] font-['Noto_Sans','Open_Sans',sans-serif] whitespace-nowrap text-[#a0a0a0]/60">
        <p className="text-[19px] leading-6">Активация Windows</p>
        <p className="text-[14px] leading-5">Чтобы активировать Windows, перейдите в раздел</p>
        <p className="text-[14px] leading-5">&quot;Параметры&quot;.</p>
      </div>
    </div>
  )
}
